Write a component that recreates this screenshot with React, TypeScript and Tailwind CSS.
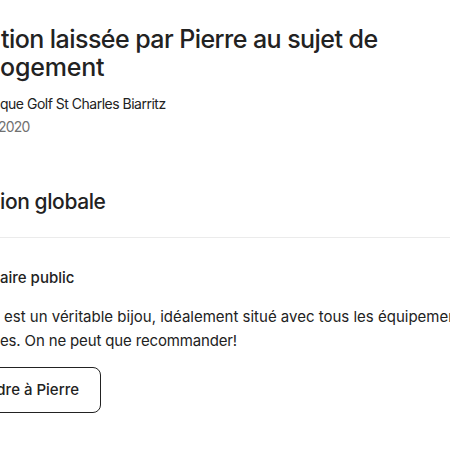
export default function App() {
  return (
    <div
      className="w-[450px] h-[450px] overflow-hidden bg-white text-[#222222] whitespace-nowrap"
      style={{ fontFamily: "Inter, 'Noto Sans', sans-serif" }}
    >
      <div className="pt-[25px]">
        <h1 className="text-[25px] leading-[28px] font-medium tracking-[-0.55px]">
          <div className="ml-[1px]">tion laissée par Pierre au sujet de</div>
          <div className="ml-[0px] tracking-[-0.2px]">ogement</div>
        </h1>
        <div className="mt-[13px] text-[14px] leading-[20px] tracking-[-0.5px]">que Golf St Charles Biarritz</div>
        <div className="mt-[3px] -ml-[2px] text-[14px] leading-[20px] tracking-[-0.8px] text-[#717171]">2020</div>
      </div>
      <h2 className="mt-[52px] text-[21px] leading-[26px] font-medium tracking-[-0.4px]">ion globale</h2>
      <div className="mt-[22px] h-px bg-[#ebebeb]" />
      <div className="mt-[30px] text-[15px] leading-[20px] font-medium">aire public</div>
      <div className="mt-[17px] text-[15px] leading-[24px] tracking-[-0.15px]">
        <div className="ml-[4px] tracking-[0px]">est un véritable bijou, idéalement situé avec tous les équipements</div>
        <div>es. On ne peut que recommander!</div>
      </div>
      <div className="mt-[14px] flex">
        <button className="-ml-[40px] w-[141px] h-[46px] pr-[21px] flex items-center justify-end border border-[#222222] rounded-[8px] text-[15px] font-medium bg-white">
          dre à Pierre
        </button>
      </div>
    </div>
  );
}
